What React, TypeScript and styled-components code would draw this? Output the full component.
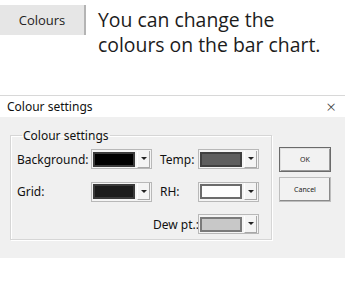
import React from "react";
import styled, { createGlobalStyle } from "styled-components";

const Global = createGlobalStyle`
  html, body { margin: 0; padding: 0; background: #ffffff; }
  body { font-family: "Open Sans", "Noto Sans", sans-serif; color: #1a1a1a; }
`;

const Page = styled.div`
  width: 345px;
  height: 285px;
  overflow: hidden;
  display: flex;
  flex-direction: column;
`;

const Intro = styled.div`
  display: flex;
  align-items: flex-start;
  gap: 12px;
  padding-top: 5px;
  height: 95px;
  box-sizing: border-box;
`;

const TopButton = styled.div`
  width: 86px;
  height: 30px;
  box-sizing: border-box;
  background: #e6e6e6;
  border-right: 2px solid #b4b4b4;
  display: flex;
  align-items: center;
  justify-content: center;
  font-family: "Open Sans", sans-serif;
  font-size: 13px;
  color: #222;
`;

const IntroText = styled.p`
  margin: 0;
  margin-top: 2px;
  font-family: "Open Sans", sans-serif;
  font-size: 19.4px;
  line-height: 25px;
  color: #1c1c1c;
`;

const Dialog = styled.div`
  width: 345px;
  border-top: 1px solid #d8d8d8;
  display: flex;
  flex-direction: column;
  font-family: "Noto Sans", "Open Sans", sans-serif;
`;

const TitleBar = styled.div`
  height: 21px;
  background: #ffffff;
  display: flex;
  align-items: center;
  justify-content: space-between;
  padding: 0 9px 0 7px;
  font-size: 12px;
  color: #111;
`;

const Close = styled.span`
  font-size: 17px;
  font-weight: 300;
  color: #444;
  line-height: 1;
`;

const Body = styled.div`
  background: #f0f0f0;
  height: 141px;
  display: flex;
  align-items: flex-start;
  padding: 10px 0 0 10px;
  box-sizing: border-box;
  gap: 7px;
`;

const Group = styled.fieldset`
  margin: 0;
  width: 262px;
  min-width: 262px;
  height: 113px;
  box-sizing: border-box;
  border: 1px solid #d6d6d6;
  box-shadow: inset 1px 1px 0 #ffffff, 1px 1px 0 #ffffff;
  padding: 5px 9px 0 6px;
`;

const Legend = styled.legend`
  font-size: 12px;
  color: #111;
  padding: 0 1px;
  margin-left: 5px;
`;

const Grid = styled.div`
  display: grid;
  grid-template-columns: 74px 62px 45px 64px;
  grid-auto-rows: 20px;
  row-gap: 12.5px;
  align-items: center;
  font-size: 12px;
  color: #111;
`;

const Label = styled.span<{ $right?: boolean; $second?: boolean }>`
  text-align: ${(p) => (p.$right ? "right" : "left")};
  padding-right: ${(p) => (p.$right ? "5px" : "0")};
  padding-left: ${(p) => (p.$second ? "7px" : "0")};
  white-space: nowrap;
`;

const Combo = styled.div`
  width: 61px;
  height: 20px;
  box-sizing: border-box;
  border: 1px solid #b8b8b8;
  background: #f4f4f4;
  display: flex;
  align-items: center;
  padding: 1px;
  gap: 2px;
`;

const Swatch = styled.div<{ $fill: string; $edge: string }>`
  width: 42px;
  height: 15px;
  box-sizing: border-box;
  background: ${(p) => p.$fill};
  border: 2px solid ${(p) => p.$edge};
`;

const Arrow = styled.div`
  flex: 1;
  height: 16px;
  border-left: 1px solid #ffffff;
  border-right: 1px solid #a8a8a8;
  border-bottom: 1px solid #a8a8a8;
  display: flex;
  align-items: center;
  justify-content: center;
  &::after {
    content: "";
    border-left: 3px solid transparent;
    border-right: 3px solid transparent;
    border-top: 3px solid #222;
  }
`;

const Buttons = styled.div`
  display: flex;
  flex-direction: column;
  gap: 5px;
  padding-top: 20px;
`;

const DlgButton = styled.div<{ $default?: boolean }>`
  width: 52px;
  height: 25px;
  box-sizing: border-box;
  background: #f2f2f2;
  border: 1px solid ${(p) => (p.$default ? "#6a6a6a" : "#bdbdbd")};
  box-shadow: ${(p) =>
    p.$default ? "inset 1px 1px 0 #e0e0e0, inset -1px -1px 0 #9a9a9a" : "inset -1px -1px 0 #8a8a8a"};
  display: flex;
  align-items: center;
  justify-content: center;
  font-size: 7px;
  color: #222;
`;

const Empty = styled.span``;

function ColorCombo({ fill, edge }: { fill: string; edge: string }) {
  return (
    <Combo>
      <Swatch $fill={fill} $edge={edge} />
      <Arrow />
    </Combo>
  );
}

export default function App() {
  return (
    <Page>
      <Global />
      <Intro>
        <TopButton>Colours</TopButton>
        <IntroText>
          You can change the
          <br />
          colours on the bar chart.
        </IntroText>
      </Intro>
      <Dialog>
        <TitleBar>
          <span>Colour settings</span>
          <Close>×</Close>
        </TitleBar>
        <Body>
          <Group>
            <Legend>Colour settings</Legend>
            <Grid>
              <Label>Background:</Label>
              <ColorCombo fill="#000000" edge="#3a3a3a" />
              <Label $second>Temp:</Label>
              <ColorCombo fill="#5e5e5e" edge="#404040" />
              <Label>Grid:</Label>
              <ColorCombo fill="#1c1c1c" edge="#3a3a3a" />
              <Label $second>RH:</Label>
              <ColorCombo fill="#fcfcfc" edge="#6a6a6a" />
              <Empty />
              <Empty />
              <Label $right>Dew pt.:</Label>
              <ColorCombo fill="#c8c8c8" edge="#7a7a7a" />
            </Grid>
          </Group>
          <Buttons>
            <DlgButton $default>OK</DlgButton>
            <DlgButton>Cancel</DlgButton>
          </Buttons>
        </Body>
      </Dialog>
    </Page>
  );
}
